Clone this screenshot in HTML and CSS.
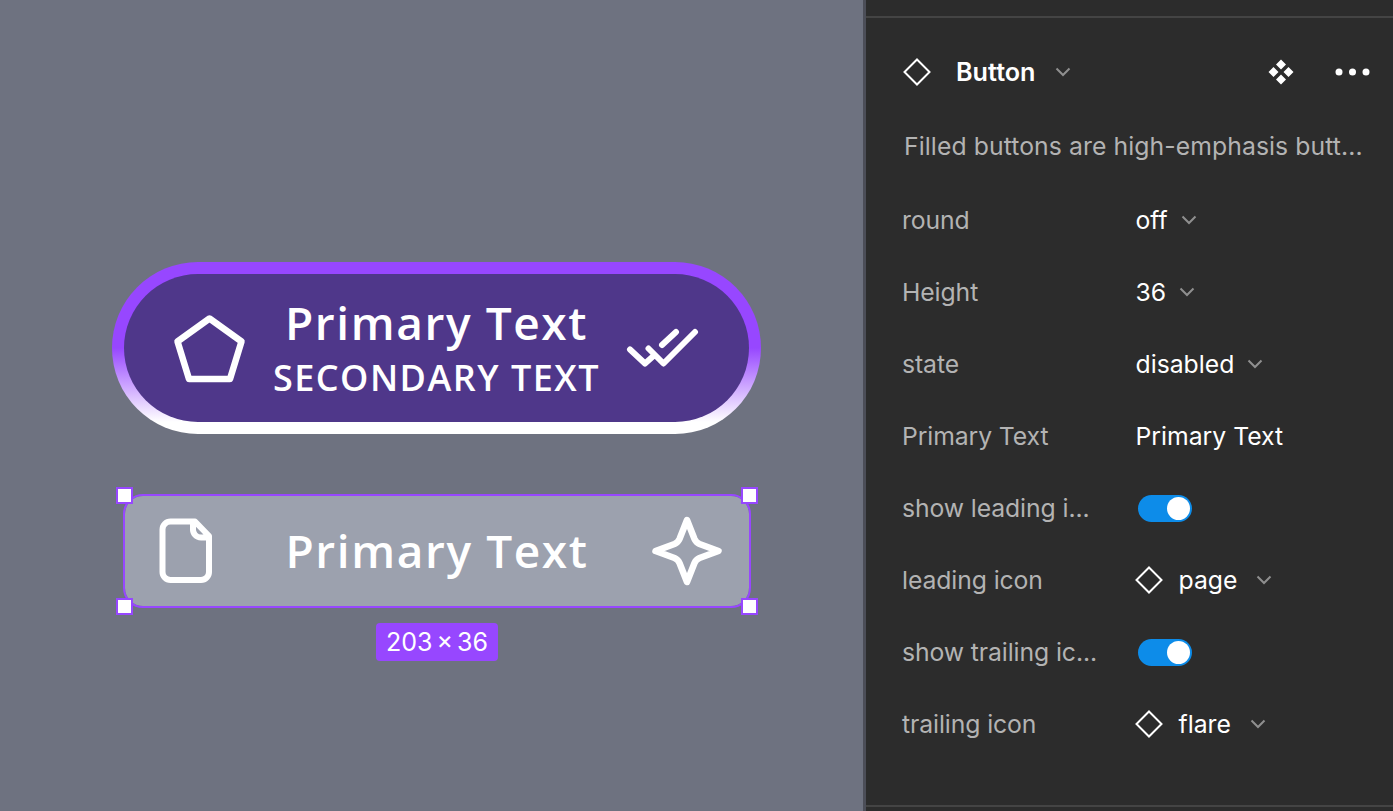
FILE: index.html
```html
<!DOCTYPE html>
<html lang="en">
<head>
<meta charset="utf-8">
<title>Button properties</title>
<link rel="stylesheet" href="styles.css">
</head>
<body>
<div class="app">
  <main class="canvas">
    <div class="btn-large">
      <div class="btn-large-fill">
        <svg class="icon-box" width="74" height="74" viewBox="174 311 74 74"><path class="stroke-6 pent" d="M210.500 318.500 L242.500 341.500 L231 379 H190 L178.500 341.500 Z"/></svg>
        <div class="btn-text">
          <span class="primary">Primary Text</span>
          <span class="secondary">SECONDARY TEXT</span>
        </div>
        <svg class="icon-box" width="74" height="74" viewBox="626 311 74 74"><path class="stroke-6" d="M630 349.500 L645 363.500 L654 355.500 M648.500 348.500 L663.500 363.500 L695 332 M662 345 L676 332"/></svg>
      </div>
    </div>
    <div class="selected">
      <svg class="icon-page" width="68" height="70" viewBox="156 517 68 70"><path class="stroke-6" d="M171 522.500 H195 L209 537 V573 A8 8 0 0 1 201 581 H170.500 A8 8 0 0 1 162.500 573 V530.500 A8 8 0 0 1 170.500 522.500 Z M193 523 V530 A8 8 0 0 0 201 538.500 H209"/></svg>
      <span class="primary">Primary Text</span>
      <svg class="icon-flare" width="74" height="74" viewBox="650 516 74 74"><path class="stroke-6 flare" d="M687 522 L694.500 541 Q696 544.500 699.500 546 L718.500 553 L699.500 560 Q696 561.500 694.500 565 L687 584 L679.500 565 Q678 561.500 674.500 560 L655.500 553 L674.500 546 Q678 544.500 679.500 541 Z"/></svg>
      <i class="handle tl"></i><i class="handle tr"></i><i class="handle bl"></i><i class="handle br"></i>
    </div>
    <div class="size-label">203 × 36</div>
  </main>
  <aside class="panel">
    <div class="panel-top"></div>
    <div class="panel-body">
      <header class="head">
        <svg class="diamond" width="28" height="28" viewBox="0 0 28 28"><path d="M14 1.500 L26.500 14 L14 26.500 L1.500 14 Z"/></svg>
        <strong class="title">Button</strong>
        <svg class="chev" width="16" height="10" viewBox="0 0 16 10"><path d="M1.500 1.500 L8 8 L14.500 1.500"/></svg>
        <svg class="comp" width="26" height="26" viewBox="0 0 26 26"><path d="M13 0.500 L18 5.500 L13 10.500 L8 5.500 Z M5.500 8 L10.500 13 L5.500 18 L0.500 13 Z M20.500 8 L25.500 13 L20.500 18 L15.500 13 Z M13 15.500 L18 20.500 L13 25.500 L8 20.500 Z"/></svg>
        <svg class="more" width="36" height="8" viewBox="0 0 36 8"><circle cx="4" cy="4" r="3.500"/><circle cx="17.500" cy="4" r="3.500"/><circle cx="31" cy="4" r="3.500"/></svg>
      </header>
      <p class="desc">Filled buttons are high-emphasis butt...</p>
      <div class="row"><span class="label">round</span><span class="value">off<svg class="chev" width="16" height="10" viewBox="0 0 16 10"><path d="M1.500 1.500 L8 8 L14.500 1.500"/></svg></span></div>
      <div class="row"><span class="label">Height</span><span class="value">36<svg class="chev" width="16" height="10" viewBox="0 0 16 10"><path d="M1.500 1.500 L8 8 L14.500 1.500"/></svg></span></div>
      <div class="row"><span class="label">state</span><span class="value">disabled<svg class="chev" width="16" height="10" viewBox="0 0 16 10"><path d="M1.500 1.500 L8 8 L14.500 1.500"/></svg></span></div>
      <div class="row"><span class="label">Primary Text</span><span class="value">Primary Text</span></div>
      <div class="row"><span class="label">show leading i...</span><span class="toggle"><i class="knob"></i></span></div>
      <div class="row"><span class="label">leading icon</span><span class="value"><svg class="diamond" width="28" height="28" viewBox="0 0 28 28"><path d="M14 1.500 L26.500 14 L14 26.500 L1.500 14 Z"/></svg><span class="icon-name">page</span><svg class="chev" width="16" height="10" viewBox="0 0 16 10"><path d="M1.500 1.500 L8 8 L14.500 1.500"/></svg></span></div>
      <div class="row"><span class="label">show trailing ic...</span><span class="toggle"><i class="knob"></i></span></div>
      <div class="row"><span class="label">trailing icon</span><span class="value"><svg class="diamond" width="28" height="28" viewBox="0 0 28 28"><path d="M14 1.500 L26.500 14 L14 26.500 L1.500 14 Z"/></svg><span class="icon-name">flare</span><svg class="chev" width="16" height="10" viewBox="0 0 16 10"><path d="M1.500 1.500 L8 8 L14.500 1.500"/></svg></span></div>
    </div>
    <div class="panel-bottom"></div>
  </aside>
</div>
</body>
</html>
```
FILE: styles.css
```css
* { box-sizing: border-box; }
html, body { margin: 0; height: 100%; overflow: hidden; }
body { font-family: Inter, "Liberation Sans", sans-serif; background: #2c2c2c; }
.app { display: flex; width: 1393px; height: 811px; }

.canvas {
  width: 863px;
  flex: none;
  background: #6e7280;
  padding: 262px 0 0 112px;
  display: flex;
  flex-direction: column;
  align-items: flex-start;
  color: #fff;
}

.btn-large {
  width: 649px;
  height: 172px;
  padding: 12px;
  border-radius: 86px;
  background: linear-gradient(180deg, #9747ff 0%, #9747ff 50%, #ffffff 93%);
}
.btn-large-fill {
  height: 148px;
  border-radius: 74px;
  background: #4f378a;
  padding: 0 49px;
  display: flex;
  align-items: center;
  justify-content: space-between;
}
.btn-text { display: flex; flex-direction: column; align-items: center; padding-bottom: 4px; }
.primary { font-family: "Open Sans", sans-serif; font-weight: 600; font-size: 46px; letter-spacing: 1.600px; white-space: nowrap; }
.secondary { font-family: "Open Sans", sans-serif; font-weight: 600; font-size: 36px; letter-spacing: 1.500px; white-space: nowrap; }
.icon-box { flex: none; }

.stroke-6 { fill: none; stroke: #fff; stroke-width: 6; stroke-linecap: round; stroke-linejoin: round; }
.pent, .flare { stroke-width: 6.500; }

.selected {
  position: relative;
  width: 624px;
  height: 110px;
  margin: 62px 0 0 13px;
  background: #9ca1ae;
  border-radius: 18px;
  outline: 2px solid #9747ff;
  padding: 0 25px 0 31px;
  display: flex;
  align-items: center;
  justify-content: space-between;
}
.selected .primary { margin-bottom: 3px; }
.handle {
  position: absolute;
  width: 17px;
  height: 17px;
  background: #fff;
  border: 2px solid #9747ff;
}
.handle.tl { left: -9px; top: -9px; }
.handle.tr { right: -9px; top: -9px; }
.handle.bl { left: -9px; bottom: -9px; }
.handle.br { right: -9px; bottom: -9px; }

.size-label {
  margin: 17px 0 0 264px;
  width: 122px;
  height: 38px;
  border-radius: 4px;
  background: #9747ff;
  font-size: 25px;
  line-height: 38px;
  word-spacing: -3px;
  text-align: center;
  white-space: nowrap;
}

.panel {
  flex: 1;
  min-width: 0;
  border-left: 3px solid #4c4e58;
  display: flex;
  flex-direction: column;
  background: #2c2c2c;
}
.panel-top { height: 18px; flex: none; border-bottom: 2px solid #444; }
.panel-body { flex: 1; padding: 0 0 0 36px; }
.panel-bottom { height: 6px; flex: none; border-top: 2px solid #444; }

.head { height: 108px; display: flex; align-items: center; color: #fff; }
.head .diamond { margin-left: 1px; }
.title { font-size: 25.200px; font-weight: 600; margin-left: 25px; }
.head .chev { margin-left: 19px; margin-right: 197px; }
.more { margin-left: 41px; fill: #fff; }
.comp { fill: #fff; }

.diamond { flex: none; fill: none; stroke: #fff; stroke-width: 2; }
.chev { flex: none; fill: none; stroke: #8f8f8f; stroke-width: 2; }

.desc {
  margin: 0 0 18px 2px;
  height: 40px;
  font-size: 24.750px;
  line-height: 40px;
  letter-spacing: 0.080px;
  color: #b3b3b3;
  white-space: nowrap;
}
.row { height: 72px; display: flex; align-items: center; font-size: 24.750px; }
.label { width: 234px; flex: none; color: #b3b3b3; white-space: nowrap; letter-spacing: -0.100px; }
.value { display: flex; align-items: center; color: #fff; white-space: nowrap; margin-left: -0.500px; }
.value > .chev { margin-left: 13px; }
.value > .diamond { margin-left: -1px; }
.icon-name { margin-left: 16px; }
.value > .icon-name + .chev { margin-left: 19px; }

.toggle {
  width: 54px;
  height: 27px;
  margin-left: 2px;
  border-radius: 14px;
  background: #0d8ce9;
  display: flex;
  align-items: center;
  justify-content: flex-end;
  padding-right: 2px;
}
.knob { width: 23px; height: 23px; border-radius: 50%; background: #fff; }
```
